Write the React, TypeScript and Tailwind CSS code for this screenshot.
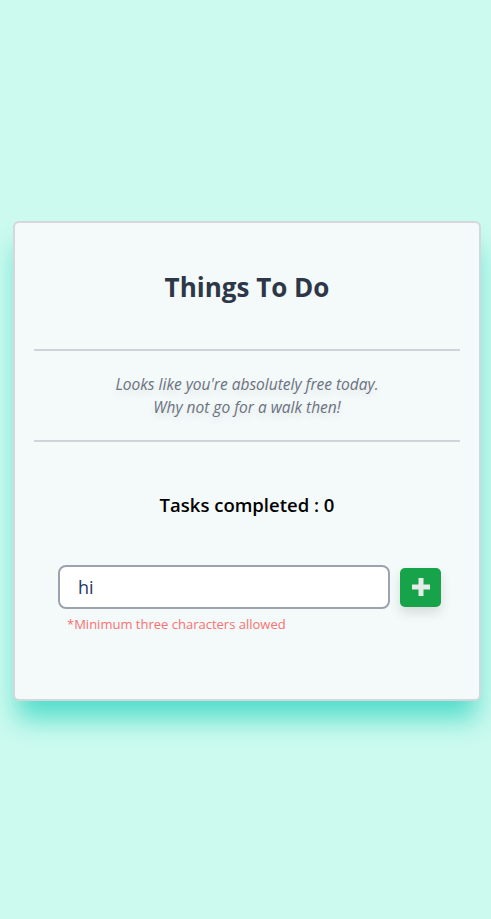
import { useState } from "react";

export default function App() {
  const [task, setTask] = useState("hi");

  return (
    <div
      className="min-h-screen w-full bg-[#ccfaef] pt-[221px]"
      style={{ fontFamily: "'Open Sans', 'Noto Sans', sans-serif" }}
    >
      <div className="ml-[13px] flex h-[480px] w-[468px] flex-col rounded-md border-2 border-[#d4d7dc] bg-[#f4f9f9] px-[19px] pt-[48px] shadow-[0_22px_26px_-4px_rgba(45,212,191,0.75)]">
        <h1 className="text-center text-[26px] font-bold leading-[32px] text-[#2d3748]">
          Things To Do
        </h1>

        <div className="mt-[46px] h-[2px] bg-[#cfd4da]" />

        {/* empty state */}
        <div className="flex flex-col items-center pt-[22px] pb-[21px]">
          <p className="text-center text-[15.5px] italic leading-[23px] text-[#6b7280] [text-shadow:0_4px_8px_rgba(0,0,0,0.12)]">
            Looks like you're absolutely free today.
            <br />
            Why not go for a walk then!
          </p>
        </div>

        <div className="h-[2px] bg-[#cfd4da]" />

        <p className="mt-[50px] text-center text-[18.5px] font-semibold leading-[26px] text-black">
          Tasks completed : 0
        </p>

        <div className="mt-[47px] flex flex-col pl-[24px]">
          <div className="flex items-center gap-[10px]">
            <input
              value={task}
              onChange={(e) => setTask(e.target.value)}
              className="h-[44px] w-[332px] rounded-lg border-2 border-[#9ca3af] bg-white px-[18px] text-[18px] text-[#1e3a5f] outline-none"
            />
            <button className="flex h-[39px] w-[41px] items-center justify-center rounded-[5px] bg-[#16a34a] shadow-[0_6px_12px_rgba(0,0,0,0.12)]">
              <svg width="22" height="22" viewBox="0 0 22 22">
                <path d="M11 2v18M2 11h18" stroke="#e5ebe8" strokeWidth="5" />
              </svg>
            </button>
          </div>
          <p className="mt-[6px] pl-[9px] text-[13px] leading-[18px] text-[#f87171]">
            *Minimum three characters allowed
          </p>
        </div>
      </div>
    </div>
  );
}
